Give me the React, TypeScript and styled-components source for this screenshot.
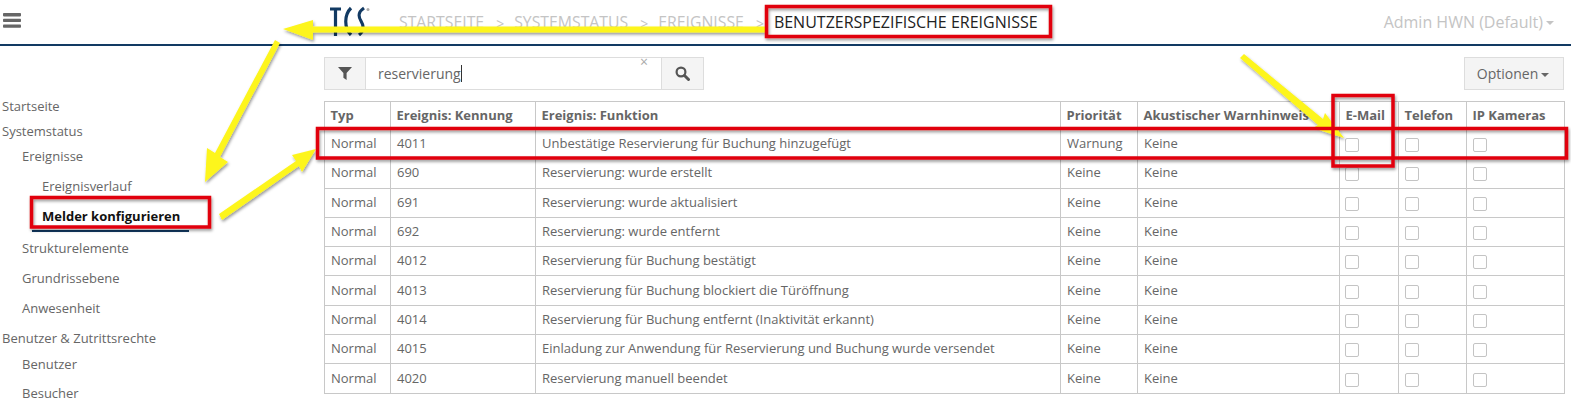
import React from "react";
import styled, { createGlobalStyle } from "styled-components";

const Global = createGlobalStyle`
  html, body { margin: 0; padding: 0; background: #fff; }
  body { font-family: "Open Sans", "Liberation Sans", sans-serif; font-size: 13px; color: #666; }
`;

const Page = styled.div`
  position: relative;
  width: 1571px;
  height: 404px;
  overflow: hidden;
`;

const Header = styled.header`
  display: flex;
  align-items: flex-start;
  height: 44px;
  border-bottom: 2px solid #123a63;
`;

const Burger = styled.div`
  width: 330px;
  padding: 13px 0 0 3px;
  box-sizing: border-box;
  color: #666;
  line-height: 0;
`;

const Logo = styled.svg`
  width: 40px;
  height: 30px;
  margin-top: 6px;
  flex: none;
`;

const Crumbs = styled.nav`
  display: flex;
  align-items: center;
  height: 44px;
  margin-left: 29px;
  font-size: 15.8px;
  text-transform: uppercase;
  color: #c4c4c4;
`;

const Sep = styled.span`
  margin: 2px 10px 0 12px;
  font-size: 14px;
  color: #c4c4c4;
`;

const Current = styled.span`
  color: #222;
  font-size: 16px;
`;

const User = styled.div`
  margin-left: auto;
  margin-right: 17px;
  height: 44px;
  display: flex;
  align-items: center;
  font-size: 16px;
  color: #c4c4c4;
`;

const Caret = styled.span<{ $color?: string }>`
  display: inline-block;
  margin-left: 3px;
  margin-top: 2px;
  border-left: 4px solid transparent;
  border-right: 4px solid transparent;
  border-top: 4px solid ${(p) => p.$color ?? "#c4c4c4"};
`;

const Body = styled.div`
  display: flex;
`;

const Sidebar = styled.aside`
  width: 324px;
  flex: none;
  padding-top: 48px;
  box-sizing: border-box;
`;

const NavItem = styled.div<{ $level: number; $height: number; $active?: boolean }>`
  height: ${(p) => p.$height}px;
  line-height: ${(p) => p.$height}px;
  padding-left: ${(p) => 2 + p.$level * 20}px;
  color: ${(p) => (p.$active ? "#111" : "#666")};
  font-weight: ${(p) => (p.$active ? 700 : 400)};
  white-space: nowrap;
`;

const ActiveLine = styled.div`
  width: 157px;
  height: 2px;
  margin: 1px 0 1px 32px;
  background: #123a63;
`;

const Main = styled.main`
  width: 1240px;
  padding-top: 11px;
`;

const Toolbar = styled.div`
  display: flex;
  justify-content: space-between;
  height: 33px;
  margin-bottom: 11px;
`;

const SearchGroup = styled.div`
  display: flex;
  height: 33px;
`;

const AddonButton = styled.div<{ $width: number }>`
  width: ${(p) => p.$width}px;
  box-sizing: border-box;
  border: 1px solid #ddd;
  background: #f4f4f4;
  display: flex;
  align-items: center;
  justify-content: center;
  color: #555;
`;

const SearchInput = styled.div`
  position: relative;
  width: 295px;
  box-sizing: border-box;
  border-top: 1px solid #ddd;
  border-bottom: 1px solid #ddd;
  padding-left: 12px;
  display: flex;
  align-items: center;
  font-size: 14px;
  color: #666;
`;

const TextCursor = styled.span`
  width: 1px;
  height: 17px;
  background: #333;
`;

const ClearMark = styled.span`
  position: absolute;
  right: 13px;
  top: -3px;
  font-size: 14px;
  line-height: 14px;
  color: #aaa;
`;

const OptionsButton = styled.div`
  width: 100px;
  height: 33px;
  box-sizing: border-box;
  border: 1px solid #ddd;
  background: #f4f4f4;
  display: flex;
  align-items: center;
  justify-content: center;
  padding-right: 2px;
  font-size: 14px;
  color: #666;
`;

const Table = styled.table`
  width: 1240px;
  border-collapse: collapse;
  table-layout: fixed;
  border: 1px solid #c8c8c8;
`;

const Th = styled.th`
  height: 28px;
  padding: 0 6px 2px 5.5px;
  box-sizing: border-box;
  border: 1px solid #c8c8c8;
  font-size: 13px;
  font-weight: 700;
  text-align: left;
  color: #666;
  white-space: nowrap;
`;

const Tr = styled.tr`
  height: 29.3px;
`;

const Td = styled.td`
  padding: 0 6px 2px;
  border: 1px solid #c8c8c8;
  font-size: 13px;
  color: #666;
  white-space: nowrap;
`;

const Check = styled.span<{ $nudge: number }>`
  display: block;
  box-sizing: border-box;
  width: 14px;
  height: 14px;
  margin: 4px 0 0 ${(p) => p.$nudge}px;
  border: 1.5px solid #c4c4c4;
  border-radius: 2px;
`;

const Overlay = styled.svg`
  position: absolute;
  left: 0;
  top: 0;
  pointer-events: none;
`;

const columns = [
  { label: "Typ", width: 66 },
  { label: "Ereignis: Kennung", width: 145 },
  { label: "Ereignis: Funktion", width: 525 },
  { label: "Priorität", width: 77 },
  { label: "Akustischer Warnhinweis", width: 202 },
  { label: "E-Mail", width: 59 },
  { label: "Telefon", width: 68 },
  { label: "IP Kameras", width: 98 },
];

const rows: [string, string, string][] = [
  ["4011", "Unbestätige Reservierung für Buchung hinzugefügt", "Warnung"],
  ["690", "Reservierung: wurde erstellt", "Keine"],
  ["691", "Reservierung: wurde aktualisiert", "Keine"],
  ["692", "Reservierung: wurde entfernt", "Keine"],
  ["4012", "Reservierung für Buchung bestätigt", "Keine"],
  ["4013", "Reservierung für Buchung blockiert die Türöffnung", "Keine"],
  ["4014", "Reservierung für Buchung entfernt (Inaktivität erkannt)", "Keine"],
  ["4015", "Einladung zur Anwendung für Reservierung und Buchung wurde versendet", "Keine"],
  ["4020", "Reservierung manuell beendet", "Keine"],
];

const nav = [
  { label: "Startseite", level: 0, height: 25 },
  { label: "Systemstatus", level: 0, height: 25 },
  { label: "Ereignisse", level: 1, height: 25 },
  { label: "Ereignisverlauf", level: 2, height: 35 },
  { label: "Melder konfigurieren", level: 2, height: 25, active: true },
];
const navRest = [
  { label: "Strukturelemente", level: 1, height: 30 },
  { label: "Grundrissebene", level: 1, height: 30 },
  { label: "Anwesenheit", level: 1, height: 30 },
  { label: "Benutzer & Zutrittsrechte", level: 0, height: 30 },
  { label: "Benutzer", level: 1, height: 23 },
  { label: "Besucher", level: 1, height: 35 },
];

const redBoxes = [
  { x: 766.5, y: 6.5, w: 284, h: 30 },
  { x: 31.5, y: 197.5, w: 178, h: 29.5 },
  { x: 317.5, y: 128.5, w: 1249, h: 29.5 },
  { x: 1333, y: 95.5, w: 60, h: 70.5 },
];

const arrows = [
  "M765 26.5 L313 26.5 L313 20 L283 29 L313 40 L313 32.5 L765 32.5 Z",
  "M275 40 L280 43 L220 157 L228 162 L205 182 L207 148 L215 153 Z",
  "M219 214 L222 220 L299 166 L302 172 L316 149 L292 155 L296 161 Z",
  "M1240 58 L1244 54 L1323 119 L1325 113 L1344 138 L1313 128 L1318 125 Z",
];

export default function App() {
  return (
    <Page>
      <Global />
      <Header>
        <Burger>
          <svg width="18" height="15" viewBox="0 0 18 15" fill="#666">
            <rect x="0" y="0" width="18" height="3.4" rx="0.8" />
            <rect x="0" y="5.7" width="18" height="3.4" rx="0.8" />
            <rect x="0" y="11.4" width="18" height="3.4" rx="0.8" />
          </svg>
        </Burger>
        <Logo viewBox="0 0 40 30">
          <g fill="none" stroke="#123a63" strokeWidth="3.2">
            <path d="M0 3 H11 M5.5 3 V30" />
            <path d="M21 2 C14 9 14 22 21 29" />
            <path d="M34 2 C28 6 28 10 31 15 C34 20 34 25 29 29" />
          </g>
          <circle cx="38" cy="3.5" r="1.5" fill="#aaa" />
        </Logo>
        <Crumbs>
          <span>Startseite</span>
          <Sep>&gt;</Sep>
          <span>Systemstatus</span>
          <Sep>&gt;</Sep>
          <span>Ereignisse</span>
          <Sep>&gt;</Sep>
          <Current>Benutzerspezifische Ereignisse</Current>
        </Crumbs>
        <User>
          Admin HWN (Default)
          <Caret />
        </User>
      </Header>
      <Body>
        <Sidebar>
          {nav.map((n) => (
            <NavItem key={n.label} $level={n.level} $height={n.height} $active={n.active}>
              {n.label}
            </NavItem>
          ))}
          <ActiveLine />
          {navRest.map((n) => (
            <NavItem key={n.label} $level={n.level} $height={n.height}>
              {n.label}
            </NavItem>
          ))}
        </Sidebar>
        <Main>
          <Toolbar>
            <SearchGroup>
              <AddonButton $width={42}>
                <svg width="14" height="13" viewBox="0 0 14 13" fill="#555">
                  <path d="M0 0 H14 L8.6 6 V13 L5.4 10.8 V6 Z" />
                </svg>
              </AddonButton>
              <SearchInput>
                reservierung
                <TextCursor />
                <ClearMark>×</ClearMark>
              </SearchInput>
              <AddonButton $width={43}>
                <svg width="15" height="15" viewBox="0 0 15 15" fill="none" stroke="#555">
                  <circle cx="6" cy="6" r="4.4" strokeWidth="2.2" />
                  <path d="M9.5 9.5 L13.5 13.5" strokeWidth="3" strokeLinecap="round" />
                </svg>
              </AddonButton>
            </SearchGroup>
            <OptionsButton>
              Optionen
              <Caret $color="#666" />
            </OptionsButton>
          </Toolbar>
          <Table>
            <colgroup>
              {columns.map((c) => (
                <col key={c.label} width={c.width} />
              ))}
            </colgroup>
            <thead>
              <tr>
                {columns.map((c) => (
                  <Th key={c.label}>{c.label}</Th>
                ))}
              </tr>
            </thead>
            <tbody>
              {rows.map(([id, fn, prio]) => (
                <Tr key={id}>
                  <Td>Normal</Td>
                  <Td>{id}</Td>
                  <Td>{fn}</Td>
                  <Td>{prio}</Td>
                  <Td>Keine</Td>
                  <Td><Check $nudge={-1} /></Td>
                  <Td><Check $nudge={0} /></Td>
                  <Td><Check $nudge={0} /></Td>
                </Tr>
              ))}
            </tbody>
          </Table>
        </Main>
      </Body>
      <Overlay width="1571" height="404" viewBox="0 0 1571 404">
        <defs>
          <filter id="shade" x="-10%" y="-10%" width="120%" height="120%">
            <feDropShadow dx="1" dy="2" stdDeviation="1.5" floodColor="#000" floodOpacity="0.4" />
          </filter>
        </defs>
        <g filter="url(#shade)">
          {arrows.map((d) => (
            <path key={d} d={d} fill="#fdf51c" />
          ))}
          {redBoxes.map((b) => (
            <rect key={b.x} x={b.x} y={b.y} width={b.w} height={b.h} fill="none" stroke="#e1060f" strokeWidth="3.5" />
          ))}
        </g>
      </Overlay>
    </Page>
  );
}
